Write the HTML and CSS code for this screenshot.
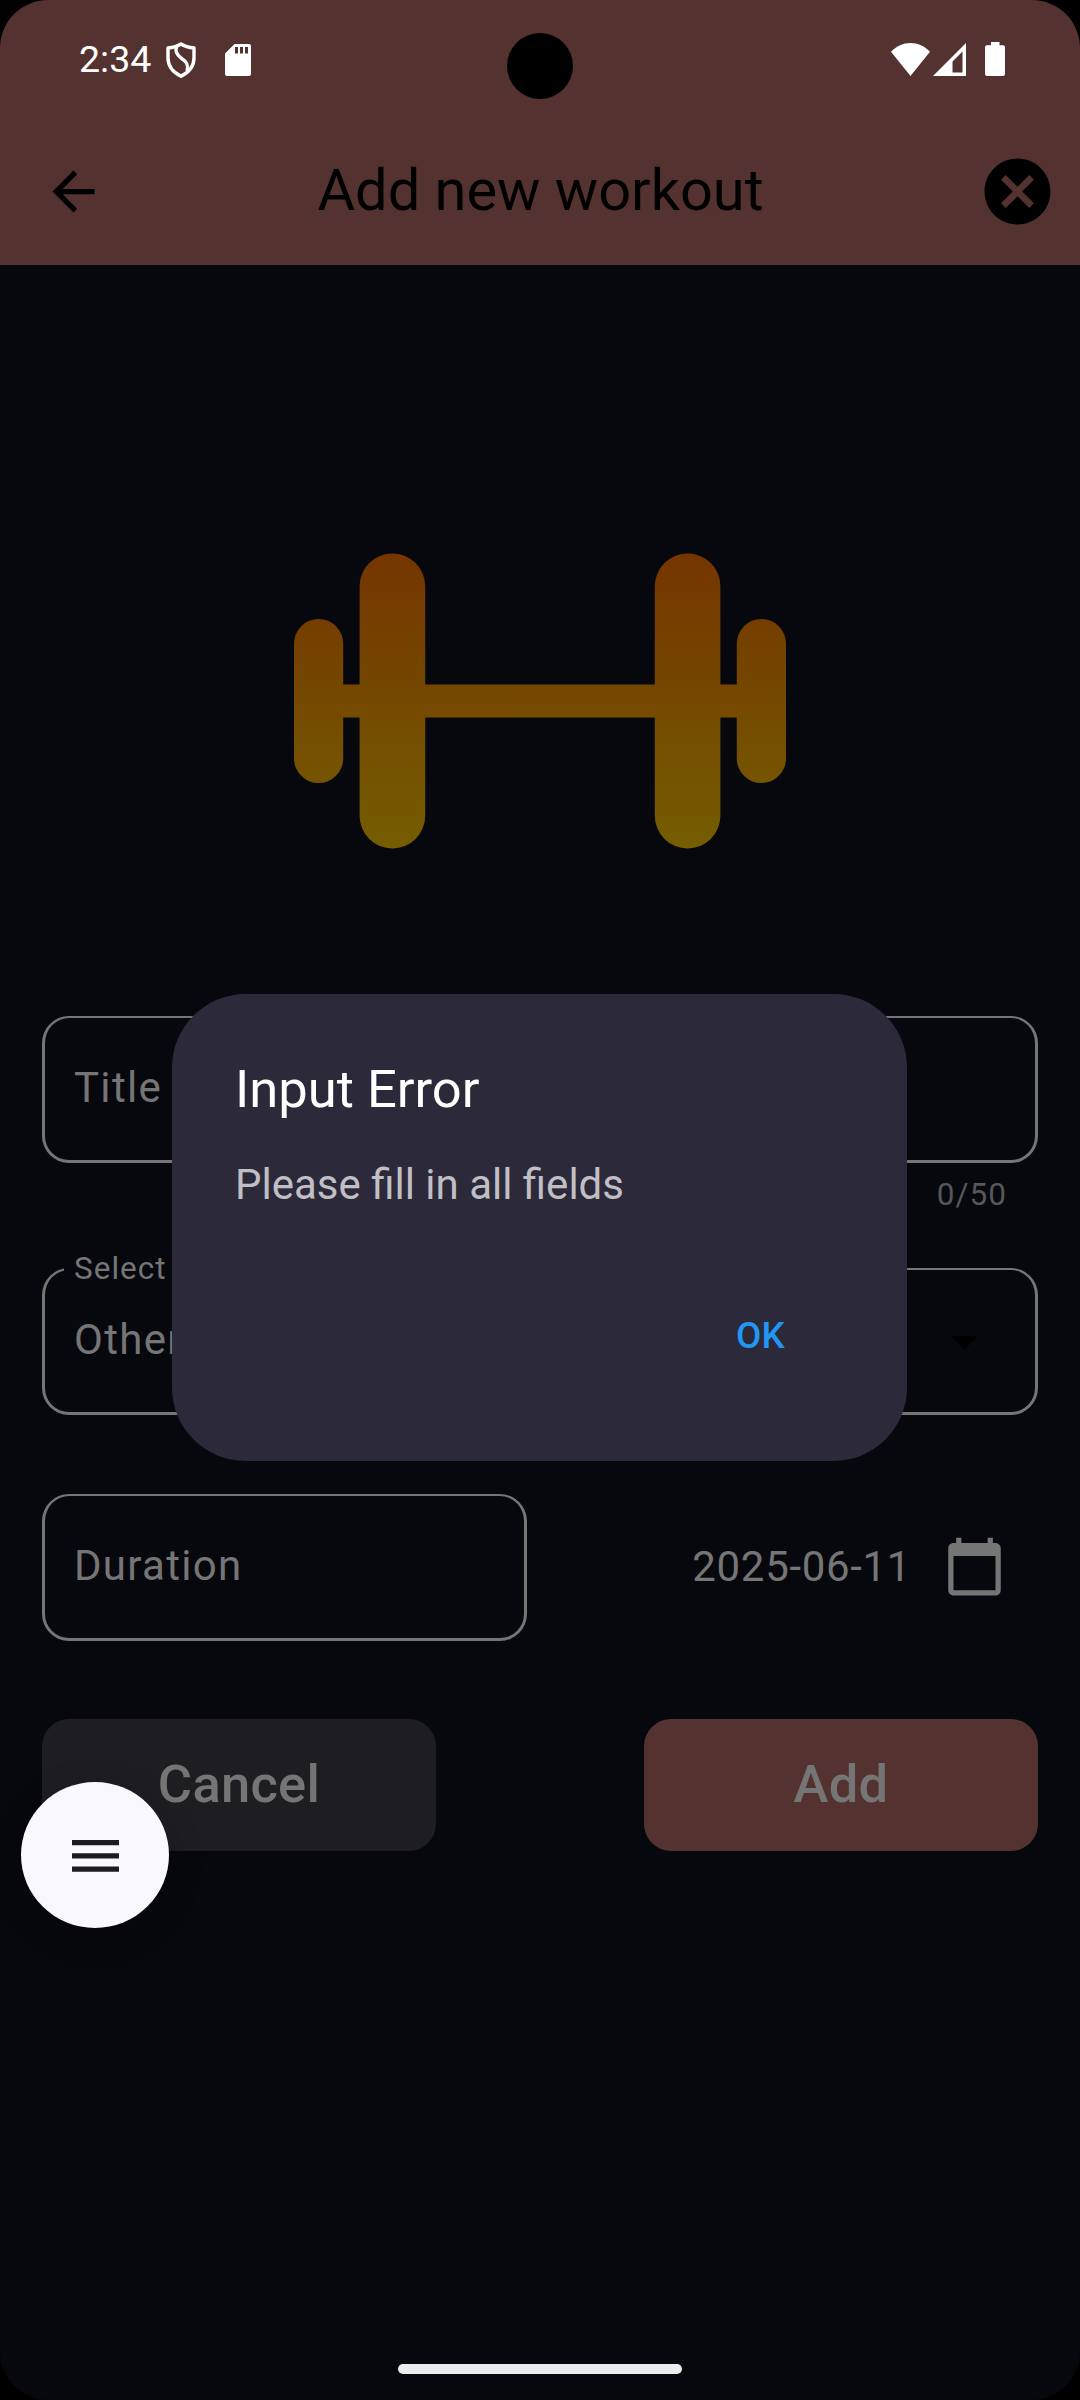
FILE: index.html
```html
<!DOCTYPE html>
<html lang="en">
<head>
<meta charset="utf-8">
<title>Add new workout</title>
<link rel="stylesheet" href="styles.css">
</head>
<body>
<div class="screen">
  <div class="status-bar">
    <span class="clock">2:34</span>
    <svg class="shield" width="30" height="36" viewBox="0 0 30 36" fill="none" stroke="#fff" stroke-width="3.4" stroke-linejoin="round">
      <path d="M15 2C11 4.500 6.500 5.500 2 6v10c0 8 4.500 14 13 18.300C23.500 30 28 24 28 16V6C23.500 5.500 19 4.500 15 2z"/>
      <path d="M10.500 4.500c-1.500 5 .5 8.500 4.500 11.500 5.500 3.500 8 7 6 13"/>
    </svg>
    <svg class="sd" width="26" height="32" viewBox="0 0 26 32">
      <path fill="#fff" fill-rule="evenodd" d="M9.500 0H24a2 2 0 0 1 2 2v28a2 2 0 0 1-2 2H2a2 2 0 0 1-2-2V9.500zM10 3v6.500h3V3zM15 3v6.500h3V3zM20 3v6.500h3V3z"/>
    </svg>
    <div class="status-right">
      <svg width="39" height="33" viewBox="0 0 39 33"><path fill="#fff" d="M19.500 0C12 0 5.500 3 0 8.800L19.500 33 39 8.800C33.500 3 27 0 19.500 0z"/></svg>
      <svg width="33" height="33" viewBox="0 0 33 33"><path fill="#fff" fill-rule="evenodd" d="M33 0v33H0zM29.500 8.500L19.500 18.500V29.500h10z"/></svg>
      <svg class="battery" width="20" height="34" viewBox="0 0 20 34"><path fill="#fff" d="M6 0h8.500v3.300H18a2 2 0 0 1 2 2V32a2 2 0 0 1-2 2H2a2 2 0 0 1-2-2V5.300a2 2 0 0 1 2-2h4z"/></svg>
    </div>
    <div class="camera"></div>
  </div>
  <header class="app-bar">
    <svg class="back" width="63" height="63" viewBox="0 0 24 24"><path d="M20 11H7.830l5.590-5.590L12 4l-8 8 8 8 1.410-1.410L7.830 13H20v-2z"/></svg>
    <h1 class="page-title">Add new workout</h1>
    <svg class="close" width="79" height="79" viewBox="0 0 24 24"><path d="M12 2C6.470 2 2 6.470 2 12s4.470 10 10 10 10-4.470 10-10S17.530 2 12 2zm5 13.590L15.590 17 12 13.410 8.410 17 7 15.590 10.590 12 7 8.410 8.410 7 12 10.590 15.590 7 17 8.410 13.410 12 17 15.590z"/></svg>
  </header>
  <main class="content">
    <svg class="dumbbell" width="492" height="296" viewBox="0 0 30 18">
      <defs><linearGradient id="glow" gradientUnits="userSpaceOnUse" x1="0" y1="0" x2="0" y2="18"><stop offset="0" stop-color="#753500"/><stop offset=".5" stop-color="#754900"/><stop offset="1" stop-color="#755d00"/></linearGradient></defs>
      <g fill="url(#glow)">
        <path d="M0 5.500a1.500 1.500 0 0 1 3 0V8h1V2a2 2 0 0 1 4 0v6h14V2a2 2 0 0 1 4 0v6h1V5.500a1.500 1.500 0 0 1 3 0v7a1.500 1.500 0 0 1-3 0V10h-1v6a2 2 0 0 1-4 0v-6H8v6a2 2 0 0 1-4 0v-6H3v2.500a1.500 1.500 0 0 1-3 0z"/>
      </g>
    </svg>
    <div class="field">Title</div>
    <div class="counter">0/50</div>
    <div class="field select">
      <span class="float-label">Select</span>
      <span>Other</span>
      <svg width="63" height="63" viewBox="0 0 24 24"><path d="M7 10l5 5 5-5z"/></svg>
    </div>
    <div class="row">
      <div class="field duration">Duration</div>
      <div class="date">
        <span>2025-06-11</span>
        <svg width="63" height="63" viewBox="0 0 24 24"><path fill="#757575" d="M20 3h-1V1h-2v2H7V1H5v2H4c-1.100 0-2 .9-2 2v16c0 1.100.9 2 2 2h16c1.100 0 2-.9 2-2V5c0-1.100-.9-2-2-2zm0 18H4V8h16v13z"/></svg>
      </div>
    </div>
    <div class="row buttons">
      <button class="btn cancel">Cancel</button>
      <button class="btn add">Add</button>
    </div>
  </main>
  <div class="dialog">
    <h2 class="dialog-title">Input Error</h2>
    <p class="dialog-text">Please fill in all fields</p>
    <button class="ok">OK</button>
  </div>
  <div class="fab">
    <svg width="47" height="32" viewBox="0 0 47 32"><path fill="#1b1b21" d="M0 0h47v5.300H0zM0 13.200h47v5.300H0zM0 26.400h47v5.300H0z"/></svg>
  </div>
  <div class="home-bar"></div>
</div>
</body>
</html>
```
FILE: styles.css
```css
* { box-sizing: border-box; }
body { margin: 0; background: #000; font-family: Roboto, "Liberation Sans", sans-serif; }
svg { display: block; flex: none; }
h1, h2, p { margin: 0; font-weight: 400; }
button { border: 0; padding: 0; font-family: inherit; font-weight: 500; }

.screen { position: relative; width: 1080px; height: 2400px; overflow: hidden; border-radius: 48px; background: #07080d; }

.status-bar { position: relative; display: flex; align-items: center; height: 118px; padding: 0 75px 0 79px; background: #543230; }
.clock { width: 87px; color: #fff; font-size: 37.500px; line-height: 44px; }
.shield { margin-top: 1px; }
.sd { margin: 2px 0 0 29px; }
.status-right { display: flex; align-items: center; gap: 3px; margin-left: auto; }
.battery { margin-left: 16px; }
.camera { position: absolute; left: 507px; top: 33px; width: 66px; height: 66px; border-radius: 50%; background: #000; }

.app-bar { display: flex; align-items: center; justify-content: space-between; height: 147px; padding: 0 23px 0 42px; background: #543230; }
.page-title { padding: 0 2px 4px 0; color: #000; font-size: 57.750px; line-height: 70px; white-space: nowrap; }

.content { display: flex; flex-direction: column; padding: 288px 42px 0; }
.dumbbell { align-self: center; margin-bottom: 167px; }
.field { position: relative; display: flex; align-items: center; justify-content: space-between; height: 147px; padding: 0 39px 4px 29px; border: 3px solid #757575; border-top-width: 2px; border-radius: 27px; color: #757575; font-size: 42px; letter-spacing: 1.310px; }
.counter { height: 42px; margin: 11px 31px 52px 0; text-align: right; color: #57575a; font-size: 31.500px; line-height: 42px; letter-spacing: 1.050px; }
.float-label { position: absolute; left: 19px; top: -22px; padding: 0 10px; background: #07080d; font-size: 31.500px; line-height: 42px; letter-spacing: 1px; }
.select svg { margin-top: 5px; }
.row { display: flex; justify-content: space-between; align-items: center; margin-top: 79px; }
.duration { width: 485px; }
.date { display: flex; align-items: center; gap: 32px; padding: 0 32px 2px 0; color: #757575; font-size: 42px; letter-spacing: .66px; }
.buttons { margin-top: 78px; }
.btn { width: 394px; height: 132px; padding-bottom: 3px; border-radius: 27px; color: #757575; font-size: 52.500px; letter-spacing: .26px; }
.cancel { background: #1e1d22; }
.add { background: #543230; }

.dialog { position: absolute; left: 172px; top: 994px; width: 735px; height: 467px; padding: 64px 63px 0; border-radius: 73.500px; background: #2c2a3a; }
.dialog-title { color: #fff; font-size: 52.500px; line-height: 63px; }
.dialog-text { margin-top: 32px; color: #c0bfc4; font-size: 42px; line-height: 63px; letter-spacing: 0; }
.ok { display: block; margin: 98px 59px 0 auto; background: none; color: #2196f3; font-size: 36.750px; line-height: 44px; letter-spacing: .26px; }

.fab { position: absolute; left: 21px; top: 1782px; display: flex; align-items: center; justify-content: center; width: 148px; height: 146px; padding-top: 2px; border-radius: 50%; background: #f9f8ff; box-shadow: 0 10px 35px rgba(0, 0, 0, .22); }
.home-bar { position: absolute; left: 398px; top: 2364px; width: 284px; height: 10px; border-radius: 5px; background: #ececec; }
```
